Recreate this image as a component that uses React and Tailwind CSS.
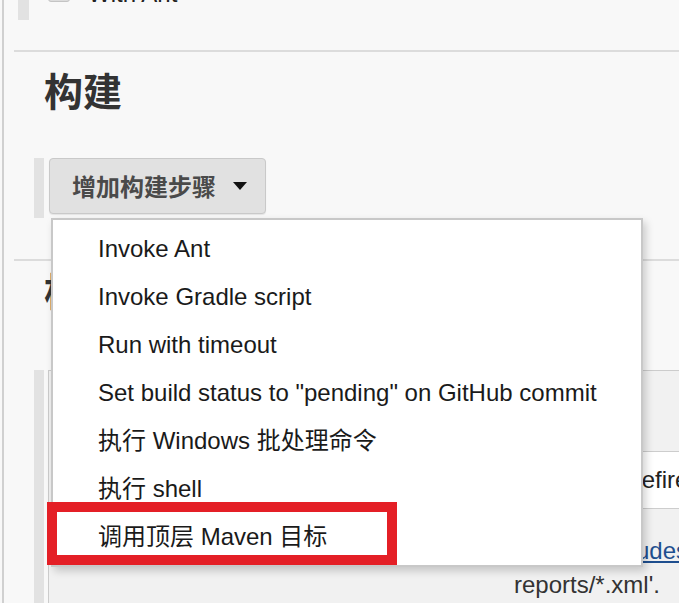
import React from "react";

const steps = [
    "Invoke Ant",
    "Invoke Gradle script",
    "Run with timeout",
    'Set build status to "pending" on GitHub commit',
    "执行 Windows 批处理命令",
    "执行 shell",
    "调用顶层 Maven 目标",
];

export default function App() {
    return (
        <div className="relative w-[679px] h-[603px] overflow-hidden bg-[#f8f8f8] pl-[2px] font-['Liberation_Sans','Noto_Sans_CJK_SC',sans-serif] text-[#333]">
            <div className="h-full border-l-2 border-[#d0d0d0]">
                {/* Build environment (cut off) */}
                <div className="flex h-[20px] ml-[14px]">
                    <div className="w-[11px] shrink-0 h-full bg-[#e2e2e2]" />
                    <div className="flex items-start -mt-[23px] ml-[19px]">
                        <div className="w-[22px] h-[22px] mt-[3px] rounded-[3px] bg-[#dcdcdc] border border-[#c4c4c4]" />
                        <span className="ml-[18px] mt-[3px] text-[24px] leading-[28px] text-[#222]">With Ant</span>
                    </div>
                </div>
                <div className="mt-[30px] ml-[10px] border-t-2 border-[#dcdcdc]" />

                {/* Build */}
                <h2 className="ml-[40px] mt-[14px] text-[39px] leading-[47px] font-bold text-[#333] font-['Noto_Sans_CJK_SC',sans-serif]">
                    构建
                </h2>

                <div className="relative flex ml-[30px] mt-[45px] h-[60px]">
                    <div className="w-[10px] shrink-0 h-full bg-[#e2e2e2]" />
                    <button className="ml-[5px] flex items-center h-[56px] w-[217px] pl-[22px] rounded-[4px] bg-[#e1e1e1] border border-[#c9c9c9] shadow-[0_1px_1px_rgba(0,0,0,0.08)]">
                        <span className="text-[24px] font-bold text-[#4a4a4a] font-['Noto_Sans_CJK_SC',sans-serif] leading-none">
                            增加构建步骤
                        </span>
                        <svg className="ml-[17px]" width="14" height="8" viewBox="0 0 14 8">
                            <path d="M0 0 H14 L7 8 Z" fill="#111" />
                        </svg>
                    </button>

                    {/* Dropdown menu */}
                    <div className="absolute left-[17px] top-full z-10 w-[592px] h-[349px] bg-white border-2 border-[#c8c8c8] pt-[5px] pl-[45px] shadow-[3px_4px_8px_rgba(0,0,0,0.18)]">
                        {steps.map((s) => (
                            <div key={s} className="h-[48px] flex items-center text-[24px] text-[#1a1a1a] whitespace-nowrap">
                                {s}
                            </div>
                        ))}
                    </div>
                </div>

                <div className="mt-[41px] ml-[10px] border-t-2 border-[#dcdcdc]" />

                {/* Post-build */}
                <h2 className="ml-[40px] mt-[5px] text-[39px] leading-[47px] font-bold text-[#333] font-['Noto_Sans_CJK_SC',sans-serif]">
                    构建后操作
                </h2>

                <div className="flex ml-[30px] mt-[57px] h-[240px]">
                    <div className="w-[10px] shrink-0 h-full bg-[#e2e2e2]" />
                    <div className="ml-[4px] min-w-0 flex-1 border-l border-t border-[#cccccc] bg-[#f1f1f1]">
                        <div className="h-[80px]" />
                        <div className="flex">
                            <div className="w-[456px] shrink-0 text-[24px] leading-[57px] pl-[20px]">测试报告(XML)</div>
                            <div className="flex-1 min-w-0 h-[58px] bg-white border-y border-[#cdcdcd] pl-[10px] text-[24px] leading-[56px] text-[#222] whitespace-nowrap overflow-hidden">
                                **/target/surefire-reports/*.xml
                            </div>
                        </div>
                        <div className="ml-[465px] mt-[25px] text-[24px] leading-[34px] text-[#333] whitespace-nowrap overflow-hidden">
                            <div>
                                Fileset{" "}
                                <a href="#" className="ml-[4px] text-[#1f4f8f] underline">
                                    'includes'
                                </a>{" "}
                                setting that specifies the generated raw XML
                            </div>
                            <div>reports/*.xml'.</div>
                        </div>
                    </div>
                </div>
            </div>

            {/* Highlight annotation */}
            <div className="absolute left-[47px] top-[502px] w-[350px] h-[63px] border-[10px] border-[#e41f26] z-20" />
        </div>
    );
}
